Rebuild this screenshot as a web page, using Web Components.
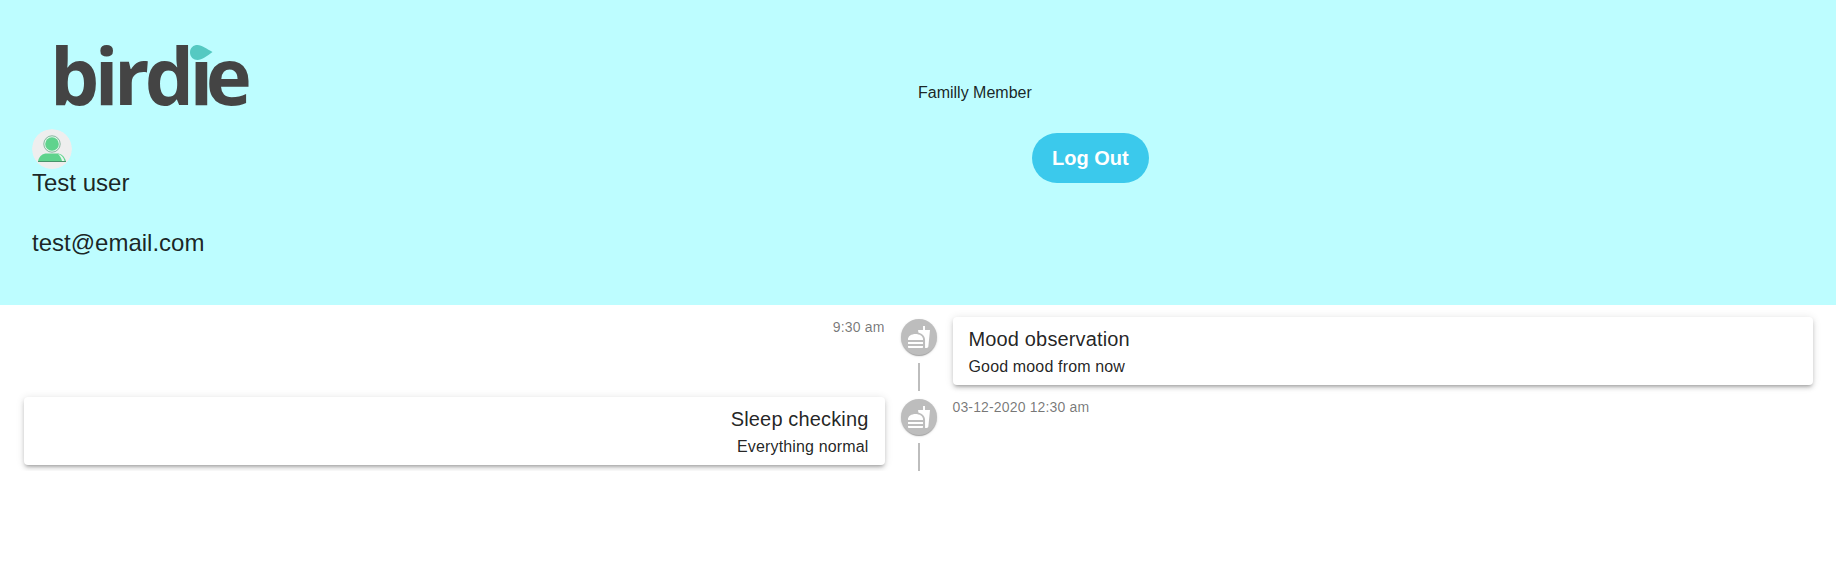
<!DOCTYPE html>
<html>
<head>
<meta charset="utf-8">
<title>Birdie</title>
<style>
  body { margin: 0; background: #fff; font-family: "Liberation Sans", Arial, sans-serif; color: rgba(0, 0, 0, 0.87); }
</style>
</head>
<body>
<app-header>
  <span slot="role">Familly Member</span>
  <user-card slot="user" name="Test user" email="test@email.com"></user-card>
</app-header>
<event-timeline>
  <timeline-item time="9:30 am" title="Mood observation" text="Good mood from now"></timeline-item>
  <timeline-item side="left" time="03-12-2020 12:30 am" title="Sleep checking" text="Everything normal"></timeline-item>
</event-timeline>

<script>
class BirdieLogo extends HTMLElement {
    constructor() {
        super();
        this.shadowDOM = this.attachShadow({ mode: "open" });
    }

    connectedCallback() {
        this.shadowDOM.innerHTML = `
        <style>
        :host { display: block; position: relative; width: 200px; height: 129px; margin-left: 18px; }
        .word {
            display: block;
            padding-top: 28px;
            font: 700 78px/94px "Open Sans", "Liberation Sans", sans-serif;
            letter-spacing: -4.6px;
            color: #444444;
        }
        .tight { letter-spacing: -7.6px; }
        svg { position: absolute; left: 138px; top: 43px; }
        </style>
        <span class="word">bird<span class="tight">i</span>e</span>
        <svg width="26" height="19" viewBox="0 0 26 19">
            <rect x="2" y="0" width="24" height="18" fill="#bdfdff"/>
            <path d="M2 9.5C2 4.5 5.5 2 9.5 2C14 2 19 6 24.5 9C19 13 14 17 9.5 17C5.5 17 2 14 2 9.5Z" fill="#55c9c2"/>
        </svg>`;
    }
}

class UserCard extends HTMLElement {
    constructor() {
        super();
        this.shadowDOM = this.attachShadow({ mode: "open" });
    }

    connectedCallback() {
        this.shadowDOM.innerHTML = `
        <style>
        :host { display: block; font-size: 24px; line-height: 28px; color: rgba(0, 0, 0, 0.87); }
        .avatar { display: block; width: 40px; height: 40px; border-radius: 50%; }
        p { margin: 0 0 32px; }
        </style>
        <svg class="avatar" viewBox="0 0 40 40">
            <circle cx="20" cy="20" r="20" fill="#eeeeee"/>
            <circle cx="20" cy="15" r="8.2" fill="#e8f7ee" stroke="#3f8f68" stroke-width="0.6"/>
            <circle cx="20" cy="15" r="6.8" fill="#5fd38d"/>
            <path d="M6 32.5C7 27 10.500 24.500 15 24.500H25C29 24.500 32.500 27 34 32.500Z" fill="#5fd38d"/>
            <path d="M26 25C29 25.500 31.500 28 32.500 32H30C29.500 29 28 27 26 25Z" fill="#e6f7ee"/>
            <path d="M6 32.500H34" stroke="#2f7d55" stroke-width="0.8"/>
        </svg>
        <p>${this.getAttribute("name")}</p>
        <p>${this.getAttribute("email")}</p>`;
    }
}

class AppHeader extends HTMLElement {
    constructor() {
        super();
        this.shadowDOM = this.attachShadow({ mode: "open" });
    }

    connectedCallback() {
        this.shadowDOM.innerHTML = `
        <style>
        :host { display: grid; grid-template-columns: 1fr 1fr; height: 305px; background: #bdfdff; }
        .left { padding-left: 32px; }
        .right { display: flex; align-items: flex-start; }
        .role { padding-top: 84px; font-size: 16px; line-height: 18px; color: rgba(0, 0, 0, 0.87); }
        button {
            margin-top: 133px;
            width: 117px;
            height: 50px;
            border: 0;
            border-radius: 25px;
            background: #3bc9ec;
            color: #fff;
            font: 700 20px "Liberation Sans", Arial, sans-serif;
        }
        </style>
        <div class="left">
            <birdie-logo></birdie-logo>
            <slot name="user"></slot>
        </div>
        <div class="right">
            <div class="role"><slot name="role"></slot></div>
            <button>Log Out</button>
        </div>`;
    }
}

class EventTimeline extends HTMLElement {
    constructor() {
        super();
        this.shadowDOM = this.attachShadow({ mode: "open" });
    }

    connectedCallback() {
        this.shadowDOM.innerHTML = `
        <style>
        :host { display: block; padding: 6px 23px 0 24px; }
        </style>
        <slot></slot>`;
    }
}

class TimelineItem extends HTMLElement {
    constructor() {
        super();
        this.shadowDOM = this.attachShadow({ mode: "open" });
    }

    connectedCallback() {
        const left = this.getAttribute("side") === "left";
        const time = `<div class="time ${left ? "" : "end"}">${this.getAttribute("time")}</div>`;
        const card = `<div class="card ${left ? "end" : ""}">
            <h6>${this.getAttribute("title")}</h6>
            <p>${this.getAttribute("text")}</p>
        </div>`;

        this.shadowDOM.innerHTML = `
        <style>
        :host {
            display: grid;
            grid-template-columns: 1fr 36px 1fr;
            column-gap: 16px;
            height: 80px;
            font-family: "Liberation Sans", Arial, sans-serif;
            letter-spacing: 0.15px;
        }
        .side { padding-top: 6px; min-width: 0; }
        .end { text-align: right; }
        .time { font-size: 14px; line-height: 20px; color: rgba(0, 0, 0, 0.54); }
        .card {
            padding: 6px 16px;
            border-radius: 4px;
            background: #fff;
            box-shadow: 0 3px 3px -2px rgba(0, 0, 0, 0.2), 0 3px 4px 0 rgba(0, 0, 0, 0.14), 0 1px 8px 0 rgba(0, 0, 0, 0.12);
        }
        h6 { margin: 0; font-size: 20px; font-weight: 400; line-height: 32px; color: rgba(0, 0, 0, 0.87); }
        p { margin: 0; font-size: 16px; line-height: 24px; color: rgba(0, 0, 0, 0.87); }
        .axis { display: flex; flex-direction: column; align-items: center; padding-top: 8px; }
        .dot {
            flex: none;
            box-sizing: border-box;
            width: 36px;
            height: 36px;
            padding: 6px;
            border-radius: 50%;
            background: #bdbdbd;
            box-shadow: 0 2px 1px -1px rgba(0, 0, 0, 0.2), 0 1px 1px 0 rgba(0, 0, 0, 0.14), 0 1px 3px 0 rgba(0, 0, 0, 0.12);
        }
        .dot svg { display: block; width: 24px; height: 24px; fill: #fff; }
        .line { flex: 1; width: 2px; margin-top: 8px; background: #bdbdbd; }
        </style>
        <div class="side">${left ? card : time}</div>
        <div class="axis">
            <div class="dot">
                <svg viewBox="0 0 24 24"><path d="M18.06 22.99h1.66c.84 0 1.53-.64 1.63-1.46L23 5.05h-5V1h-1.97v4.05h-4.97l.3 2.34c1.71.47 3.31 1.32 4.27 2.26 1.44 1.42 2.43 2.89 2.43 5.29v8.05zM1 21.99V21h15.03v.99c0 .55-.45 1-1.01 1H2.01c-.56 0-1.01-.45-1.01-1zm15.03-7c.5-4-3.75-6-7.5-6s-8 2-7.5 6h15.03zM1.02 17h15v2h-15z"/></svg>
            </div>
            <div class="line"></div>
        </div>
        <div class="side">${left ? time : card}</div>`;
    }
}

customElements.define("birdie-logo", BirdieLogo);
customElements.define("user-card", UserCard);
customElements.define("app-header", AppHeader);
customElements.define("event-timeline", EventTimeline);
customElements.define("timeline-item", TimelineItem);
</script>
</body>
</html>
